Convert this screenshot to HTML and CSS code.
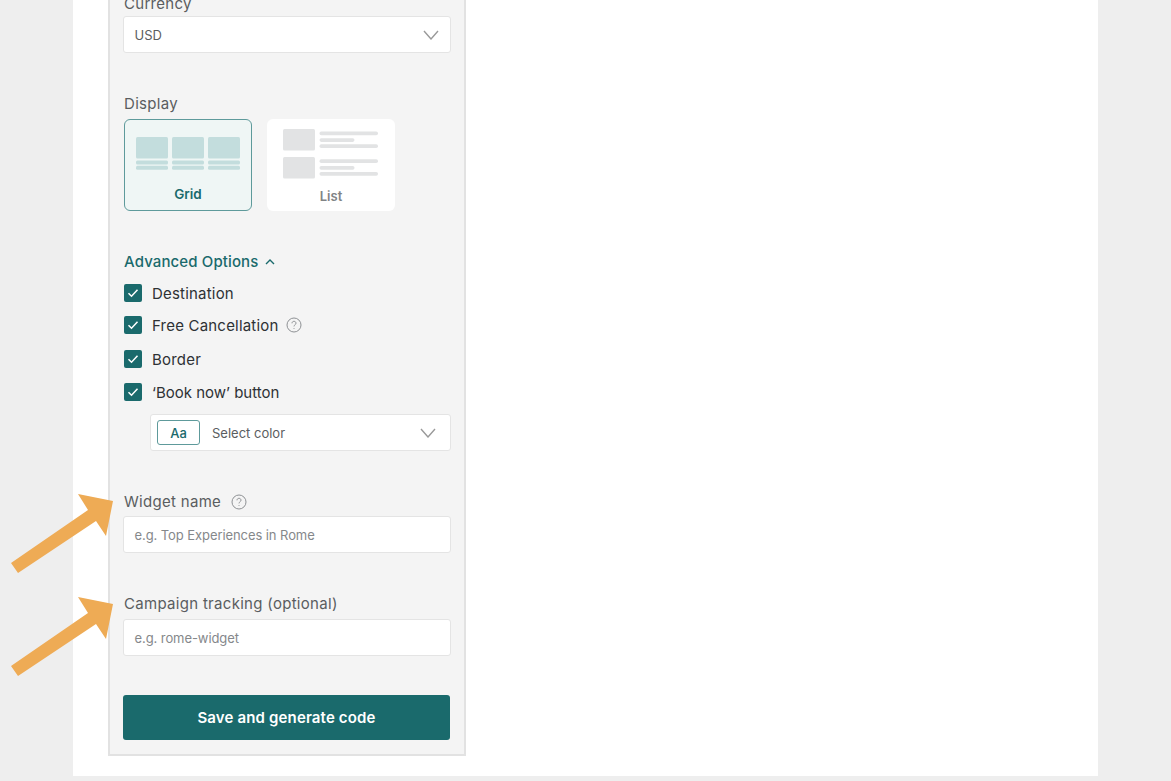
FILE: index.html
```html
<!DOCTYPE html>
<html lang="en">
<head>
<meta charset="UTF-8" />
<title>Widget settings</title>
<meta name="viewport" content="width=device-width, initial-scale=1" />
<link rel="stylesheet" href="styles.css">
</head>
<body>
<main class="card">
  <form class="panel">
    <div class="field-label">Currency</div>
    <div class="select">
      <span>USD</span>
      <svg class="chevron" viewBox="0 0 16 10"><path d="M1 1l7 8 7-8"/></svg>
    </div>

    <div class="field-label gap-top">Display</div>
    <div class="tiles">
      <div class="tile active">
        <svg class="thumb" viewBox="0 0 128 60">
          <rect x="12" y="7" width="32" height="21.500" rx="1.500"/>
          <rect x="48" y="7" width="32" height="21.500" rx="1.500"/>
          <rect x="84" y="7" width="32" height="21.500" rx="1.500"/>
          <rect x="12" y="30.500" width="32" height="4" rx="1.500"/>
          <rect x="48" y="30.500" width="32" height="4" rx="1.500"/>
          <rect x="84" y="30.500" width="32" height="4" rx="1.500"/>
          <rect x="12" y="35.700" width="32" height="4" rx="1.500"/>
          <rect x="48" y="35.700" width="32" height="4" rx="1.500"/>
          <rect x="84" y="35.700" width="32" height="4" rx="1.500"/>
        </svg>
        <span>Grid</span>
      </div>
      <div class="tile">
        <svg class="thumb" viewBox="0 0 128 60">
          <rect x="16" y="0" width="32" height="21.500" rx="1.500"/>
          <rect x="52.500" y="2.500" width="58.500" height="3.700" rx="1.800"/>
          <rect x="52.500" y="9.200" width="35" height="3.700" rx="1.800"/>
          <rect x="52.500" y="15.300" width="58.500" height="3.700" rx="1.800"/>
          <rect x="16" y="28" width="32" height="21.500" rx="1.500"/>
          <rect x="52.500" y="30.300" width="58.500" height="3.700" rx="1.800"/>
          <rect x="52.500" y="37" width="35" height="3.700" rx="1.800"/>
          <rect x="52.500" y="43" width="58.500" height="3.700" rx="1.800"/>
        </svg>
        <span>List</span>
      </div>
    </div>

    <div class="advanced">Advanced Options
      <svg viewBox="0 0 10 6"><path d="M1 5l4-4 4 4"/></svg>
    </div>

    <div class="options">
      <div class="opt"><span class="box"><svg viewBox="0 0 18 18"><path d="M4.500 9.200l3 3 6-6.500"/></svg></span>Destination</div>
      <div class="opt opt-up"><span class="box"><svg viewBox="0 0 18 18"><path d="M4.500 9.200l3 3 6-6.500"/></svg></span>Free Cancellation
        <svg class="help" viewBox="0 0 16 16"><circle cx="8" cy="8" r="7"/><path d="M6 6.300c0-1.200.9-2 2-2s2 .8 2 1.900c0 1.500-2 1.600-2 3.200"/><path d="M8 11.200v.8"/></svg>
      </div>
      <div class="opt"><span class="box"><svg viewBox="0 0 18 18"><path d="M4.500 9.200l3 3 6-6.500"/></svg></span>Border</div>
      <div class="opt opt-tight"><span class="box"><svg viewBox="0 0 18 18"><path d="M4.500 9.200l3 3 6-6.500"/></svg></span>‘Book now’ button</div>
    </div>

    <div class="select color-select">
      <span class="swatch">Aa</span>
      <span class="color-text">Select color</span>
      <svg class="chevron" viewBox="0 0 16 10"><path d="M1 1l7 8 7-8"/></svg>
    </div>

    <div class="field-label gap-top">Widget name
      <svg class="help help-wide" viewBox="0 0 16 16"><circle cx="8" cy="8" r="7"/><path d="M6 6.300c0-1.200.9-2 2-2s2 .8 2 1.900c0 1.500-2 1.600-2 3.200"/><path d="M8 11.200v.8"/></svg>
    </div>
    <div class="select input">e.g. Top Experiences in Rome</div>

    <div class="field-label gap-top">Campaign tracking (optional)</div>
    <div class="select input input-low">e.g. rome-widget</div>

    <div class="save">Save and generate code</div>
  </form>
</main>

<!-- annotation arrows drawn over the screenshot -->
<svg class="arrow" viewBox="0 0 1171 781"><polygon points="11,563 88,510 78,494 113,501 106,536 96,521 18,573"/></svg>
<svg class="arrow" viewBox="0 0 1171 781"><polygon points="11,666 88,613 78,597 113,604 106,639 96,624 18,676"/></svg>
</body>
</html>
```

FILE: styles.css
```css
:root {
  --teal:#1a6a6c;
  --border:#e2e2e2;
  --panel:#f4f4f4;
  --text:#5a5d60;
  --muted:#85888b;
}

body { margin:0; height:781px; overflow:hidden; background:#eeeeee; font-family:Inter,"Open Sans",sans-serif; color:var(--text); font-size:15px; position:relative; }

.card { background:#fff; margin:-20px 73px 0 73px; height:796px; padding:0 0 0 35px; box-sizing:border-box; overflow:hidden; }
.panel { width:358px; box-sizing:border-box; background:var(--panel); border:2px solid var(--border); border-top:0; padding:13px 0 14px 14px; }

.field-label { height:20px; box-sizing:border-box; padding-top:1px; line-height:20px; display:flex; align-items:center; letter-spacing:.3px; }
.gap-top { margin-top:40px; }

.select { width:328px; height:37px; box-sizing:border-box; margin:3px 0 0 -1.500px; background:#fff; border:1px solid #e4e4e4; border-radius:3px; padding:0 11px 0 11px; display:flex; align-items:center; justify-content:space-between; font-size:13px; letter-spacing:0; }
.chevron { width:16px; height:10px; fill:none; stroke:#999; stroke-width:1.400; }

.tiles { display:flex; gap:15px; margin-top:6px; }
.tile { width:128px; height:92px; box-sizing:border-box; background:#fff; border-radius:6px; padding-top:10px; display:flex; flex-direction:column; align-items:center; font-size:13px; font-weight:600; color:#808385; }
.tile .thumb { width:128px; height:60px; fill:#e2e3e4; flex:none; }
.tile span { margin-top:-2px; line-height:18px; }
.tile.active { background:#eff6f5; border:1px solid #5e9a9b; color:var(--teal); padding-top:10px; }
.tile.active .thumb { fill:#c3dddd; }
.tile.active span { margin-top:-5px; font-size:13.500px; }

.advanced { margin-top:41px; height:20px; line-height:20px; color:var(--teal); font-weight:500; display:flex; align-items:center; gap:7px; letter-spacing:.12px; }
.advanced svg { width:10px; height:6px; fill:none; stroke:var(--teal); stroke-width:1.400; }

.options { margin-top:12px; display:flex; flex-direction:column; gap:15px; }
.opt { display:flex; align-items:center; height:18px; color:#2e3134; letter-spacing:.2px; }
.opt-up { margin-top:-1px; margin-bottom:1px; }
.opt-tight { letter-spacing:0; }
.box { width:18px; height:18px; border-radius:2px; background:var(--teal); margin-right:10px; flex:none; }
.box svg { display:block; fill:none; stroke:#fff; stroke-width:1.500; }
.help { width:16px; height:16px; margin-left:7px; fill:none; stroke:#8e9194; stroke-width:1; }
.help-wide { margin-left:10px; }

.color-select { width:301px; height:37px; margin:13px 0 0 26px; padding:0 14px 0 6px; justify-content:flex-start; }
.color-select .chevron { margin-left:auto; }
.swatch { width:43px; height:25px; box-sizing:border-box; border:1px solid #5e9a9b; border-radius:3px; color:var(--teal); font-weight:500; display:flex; align-items:center; justify-content:center; }
.color-text { margin-left:12px; }

.input { margin-top:5px; color:var(--muted); justify-content:flex-start; letter-spacing:-.08px; }
.input-low { margin-top:6px; }

.save { width:327px; height:45px; margin:39px 0 0 -1px; background:var(--teal); border-radius:3px; color:#fff; font-size:15px; font-weight:600; letter-spacing:.15px; display:flex; align-items:center; justify-content:center; }

.arrow { position:absolute; left:0; top:0; width:1171px; height:781px; fill:#eeab55; pointer-events:none; }
```
